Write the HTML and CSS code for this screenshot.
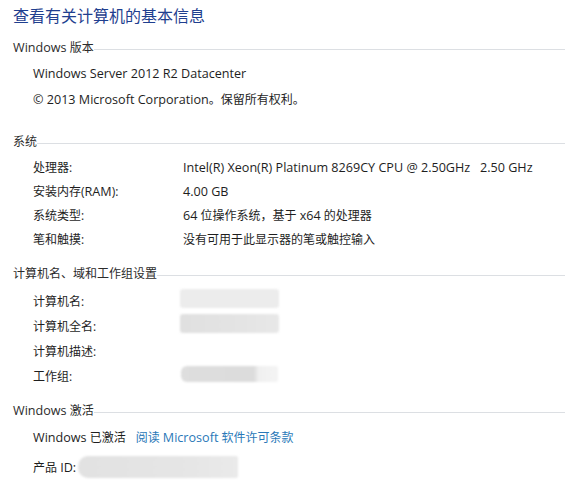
FILE: index.html
```html
<!DOCTYPE html>
<html lang="zh-CN">
<head>
  <meta charset="UTF-8">
  <title>查看有关计算机的基本信息</title>
  <link rel="stylesheet" href="styles.css">
</head>
<body>
  <h1 class="title">查看有关计算机的基本信息</h1>

  <!-- Windows 版本 -->
  <div class="group-head group-head--first"><span><span class="en">Windows</span> 版本</span></div>
  <div class="rows rows--edition">
    <div class="row"><span class="en">Windows Server 2012 R2 Datacenter</span></div>
    <div class="row"><span><span class="en">© 2013 Microsoft Corporation</span>。保留所有权利。</span></div>
  </div>

  <!-- 系统 -->
  <div class="group-head group-head--system"><span>系统</span></div>
  <div class="rows rows--system">
    <div class="row"><span class="label">处理器:</span><span class="value en">Intel(R) Xeon(R) Platinum 8269CY CPU @ 2.50GHz&nbsp;&nbsp;&nbsp;2.50 GHz</span></div>
    <div class="row"><span class="label">安装内存(<span class="en">RAM</span>):</span><span class="value en">4.00 GB</span></div>
    <div class="row"><span class="label">系统类型:</span><span class="value"><span class="en">64</span> 位操作系统，基于 <span class="en">x64</span> 的处理器</span></div>
    <div class="row"><span class="label">笔和触摸:</span><span class="value">没有可用于此显示器的笔或触控输入</span></div>
  </div>

  <!-- 计算机名 -->
  <div class="group-head"><span>计算机名、域和工作组设置</span></div>
  <div class="rows rows--name">
    <div class="row"><span class="label">计算机名:</span><span class="value"><span class="masked masked--light"></span></span></div>
    <div class="row"><span class="label">计算机全名:</span><span class="value"><span class="masked masked--dark"></span></span></div>
    <div class="row"><span class="label">计算机描述:</span><span class="value"></span></div>
    <div class="row"><span class="label">工作组:</span><span class="value"><span class="masked masked--group"></span></span></div>
  </div>

  <!-- 激活 -->
  <div class="group-head"><span><span class="en">Windows</span> 激活</span></div>
  <div class="rows rows--activation">
    <div class="row"><span><span class="en">Windows</span> 已激活</span><a class="link" href="#">阅读 <span class="en">Microsoft</span> 软件许可条款</a></div>
    <div class="row row--pid"><span>产品 <span class="en">ID:</span></span><span class="masked masked--pid"></span></div>
  </div>
</body>
</html>
```

FILE: styles.css
```css
/* Base */
body {
  margin: 0;
  padding: 0 0 0 13px;
  background: #ffffff;
  color: #1e1e1e;
  font-family: "Open Sans", "Noto Sans CJK SC", sans-serif;
  font-size: 12px;
  overflow: hidden;
}

/* Latin runs are set a touch larger, like Segoe UI next to YaHei */
.en {
  font-size: 12.6px;
}

.title {
  margin: 4px 0 0;
  font-size: 16px;
  font-weight: normal;
  line-height: 22px;
  color: #1f3f8f;
  font-family: "Noto Sans CJK SC", sans-serif;
}

/* Group headings with rule */
.group-head {
  display: flex;
  align-items: center;
  height: 20px;
  margin-top: 12px;
  color: #2b2b2b;
}

.group-head::after {
  content: "";
  flex: 1;
  height: 1px;
  margin-top: 4px;
  background: #dcdfe3;
}

.group-head--first {
  margin-top: 11px;
}

.group-head--system {
  margin-top: 19px;
}

/* Rows */
.rows {
  padding-left: 20px;
}

.row {
  display: flex;
  align-items: center;
  white-space: nowrap;
}

.label {
  width: 150px;
  flex: 0 0 150px;
}

.rows--edition { padding-top: 3px; }
.rows--edition .row { height: 26px; }

.rows--system { padding-top: 4px; }
.rows--system .row { height: 24px; }

.rows--name { padding-top: 5px; }
.rows--name .row { height: 25px; }

.rows--activation { padding-top: 4px; }
.rows--activation .row { height: 26px; }
.rows--activation .row--pid { margin-top: 4px; }

.link {
  margin-left: 10px;
  color: #2a78b8;
  text-decoration: none;
}

/* Blurred-out values */
.masked {
  display: inline-block;
  filter: blur(1px);
  border-radius: 3px;
}

.masked--light {
  width: 99px;
  height: 19px;
  margin-left: -3px;
  background: #ececec;
}

.masked--dark {
  width: 99px;
  height: 19px;
  margin-left: -3px;
  background: linear-gradient(90deg, #e0e0e0 0, #e4e4e4 60%, #e8e8e8 100%);
}

.masked--group {
  width: 97px;
  height: 16px;
  margin-left: -2px;
  background: linear-gradient(90deg, #dedede 0, #dcdcdc 75%, #f0f0f0 80%, #f4f4f4 100%);
  border-radius: 6px 2px 2px 6px;
}

.masked--pid {
  width: 160px;
  height: 22px;
  margin-left: 2px;
  background: linear-gradient(90deg, #e2e2e2 0, #e6e6e6 70%, #eaeaea 100%);
  border-radius: 10px 2px 2px 10px;
}
```
